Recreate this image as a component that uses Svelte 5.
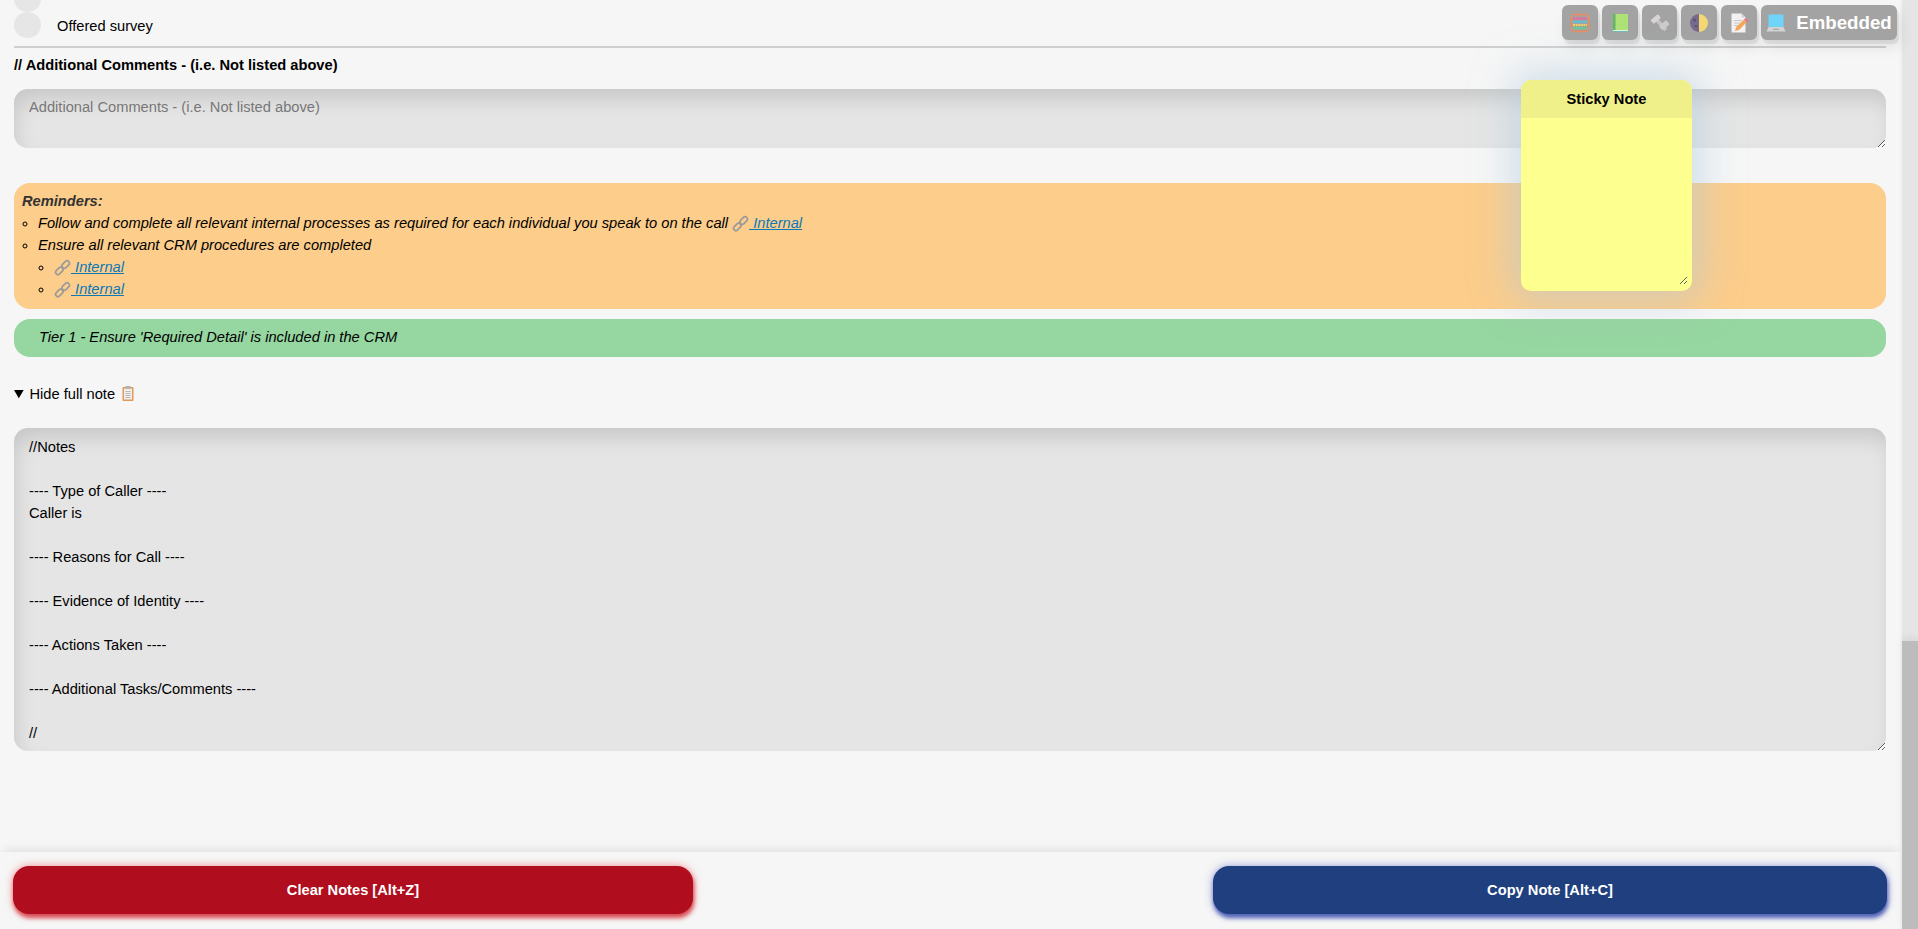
<script>
  let comments = $state('');
  let sticky = $state('');
  let showNote = $state(true);
  let note = $state(`//Notes

---- Type of Caller ----
Caller is

---- Reasons for Call ----

---- Evidence of Identity ----

---- Actions Taken ----

---- Additional Tasks/Comments ----

//`);
</script>

{#snippet chain()}
  <svg class="chain" viewBox="0 0 16 16" width="17" height="17">
    <g fill="none" stroke="#9a9a9a" stroke-width="1.6">
      <rect x="1" y="9" width="8" height="4.4" rx="2.2" transform="rotate(-45 5 11.2)" />
      <rect x="7" y="3" width="8" height="4.4" rx="2.2" transform="rotate(-45 11 5.2)" />
    </g>
  </svg>
{/snippet}

<div class="page">
  <main class="content">
    <div class="clipped"><span class="dot"></span></div>
    <div class="check-row">
      <span class="dot"></span>
      <span class="check-label">Offered survey</span>
    </div>
    <hr />
    <h4>// Additional Comments - (i.e. Not listed above)</h4>
    <textarea class="box comments" placeholder="Additional Comments - (i.e. Not listed above)" bind:value={comments}></textarea>

    <div class="reminders">
      <strong>Reminders:</strong>
      <ul>
        <li>Follow and complete all relevant internal processes as required for each individual you speak to on the call <a href="#top">{@render chain()} Internal</a></li>
        <li>Ensure all relevant CRM procedures are completed
          <ul>
            <li><a href="#top">{@render chain()} Internal</a></li>
            <li><a href="#top">{@render chain()} Internal</a></li>
          </ul>
        </li>
      </ul>
    </div>
    <div class="tier">Tier 1 - Ensure 'Required Detail' is included in the CRM</div>

    <details bind:open={showNote}>
      <summary>Hide full note
        <svg class="clip" viewBox="0 0 12 15" width="12" height="15">
          <rect x="0.5" y="1" width="11" height="14" rx="1" fill="#dc9a5c" />
          <rect x="2" y="2.5" width="8" height="11" fill="#f3efe8" />
          <rect x="3.5" y="0" width="5" height="3" fill="#b5b0aa" />
          <path d="M3.5 5.5h5M3.5 7.5h5M3.5 9.5h5M3.5 11.5h5" stroke="#a9a9a9" stroke-width="0.8" />
        </svg>
      </summary>
      <textarea class="box full-note" bind:value={note}></textarea>
    </details>
  </main>

  <footer class="actions">
    <button class="clear">Clear Notes [Alt+Z]</button>
    <button class="copy">Copy Note [Alt+C]</button>
  </footer>

  <div class="scrollbar"><div class="thumb"></div></div>

  <div class="toolbar">
    <button class="tool" aria-label="Calculator">
      <svg viewBox="0 0 20 20" width="20" height="20">
        <rect x="1.5" y="1.5" width="17" height="17" rx="3.5" fill="#a9a29c" stroke="#ee8b5c" stroke-width="1.4" />
        <path d="M3 5.5h14" stroke="#ef5fa0" stroke-width="2.2" stroke-dasharray="2 .6" />
        <path d="M3 8.8h14" stroke="#4fc3e8" stroke-width="2.2" stroke-dasharray="2 .6" />
        <path d="M3 12h14" stroke="#f3d060" stroke-width="2.2" stroke-dasharray="2 .6" />
        <path d="M3 15.2h14" stroke="#5ad39b" stroke-width="2.2" stroke-dasharray="2 .6" />
      </svg>
    </button>
    <button class="tool" aria-label="Guide">
      <svg viewBox="0 0 20 20" width="20" height="20">
        <rect x="5" y="1" width="13" height="16" fill="#aee176" />
        <rect x="3" y="1" width="2.5" height="18" fill="#5fb865" />
        <rect x="3" y="17" width="15" height="1.2" fill="#e4f3e6" />
        <rect x="3" y="18.2" width="15" height="0.9" fill="#5cbcb4" />
      </svg>
    </button>
    <button class="tool" aria-label="Tools">
      <svg viewBox="0 0 20 20" width="20" height="20">
        <path d="M5 5L16 17" stroke="#c9c3c8" stroke-width="3.5" />
        <rect x="1" y="3.5" width="9.5" height="5" rx="1" fill="#d8d3d7" transform="rotate(-40 5.8 6)" />
        <rect x="9.5" y="9.5" width="9.5" height="5.5" rx="1" fill="#cfcace" transform="rotate(-40 14.2 12.2)" />
      </svg>
    </button>
    <button class="tool" aria-label="Theme">
      <svg viewBox="0 0 20 20" width="20" height="20">
        <path d="M10 1a9 9 0 0 0 0 18z" fill="#776a8c" />
        <path d="M10 1a9 9 0 0 1 0 18z" fill="#f5d774" />
        <circle cx="5.5" cy="7" r="1.6" fill="#5d5272" />
        <circle cx="7" cy="13" r="1.2" fill="#5d5272" />
      </svg>
    </button>
    <button class="tool" aria-label="Notes">
      <svg viewBox="0 0 20 20" width="20" height="20">
        <path d="M2.5 0.5h10l4 4v15h-14z" fill="#f4f1f2" />
        <path d="M12.5 0.5l4 4h-4z" fill="#d6d0d4" />
        <path d="M5 7.5h8M5 10h6M5 12.5h4" stroke="#c9c3d0" stroke-width="1" />
        <path d="M6 18l1.2-4L15 6.5l2.7 2.7L10 17z" fill="#f2a65a" />
        <path d="M15 6.5l1.6-1.6 2.8 2.8-1.7 1.5z" fill="#ef6f8e" />
      </svg>
    </button>
    <button class="tool mode">
      <svg viewBox="0 0 20 20" width="20" height="20">
        <rect x="2.5" y="1.5" width="15" height="12.5" fill="#6fd4f7" />
        <path d="M2.5 14h15l2 4.5H.5z" fill="#d2d2d2" />
        <rect x="7" y="15.8" width="6" height="0.9" fill="#999" />
      </svg>
      Embedded
    </button>
  </div>

  <div class="sticky">
    <div class="sticky-title">Sticky Note</div>
    <textarea bind:value={sticky}></textarea>
  </div>
</div>

<style>
  :global(body) {
    margin: 0;
    overflow: hidden;
    background: #f6f6f6;
  }
  .page {
    position: relative;
    height: 929px;
    overflow: hidden;
    font-family: "Liberation Sans", Arial, sans-serif;
    font-size: 14.67px;
    color: #000;
  }
  .content {
    width: 1888px;
    padding-left: 14px;
    height: 852px;
  }
  .clipped {
    display: flex;
    align-items: flex-end;
    height: 12px;
  }
  .clipped .dot {
    flex: none;
  }
  .check-row {
    display: flex;
    align-items: center;
    gap: 16px;
    height: 26px;
  }
  .check-label {
    padding-top: 2px;
  }
  .dot {
    display: block;
    width: 27px;
    height: 26px;
    border-radius: 50%;
    background: #e6e6e6;
  }
  hr {
    height: 2px;
    border: 0;
    margin: 8px 0 0;
    background: #cfcfcf;
    width: 1872px;
  }
  h4 {
    font-size: 14.67px;
    margin: 9px 0 16px;
    line-height: 16px;
  }
  .box {
    display: block;
    box-sizing: border-box;
    width: 1872px;
    margin: 0;
    padding: 8px 15px;
    border: 0;
    border-radius: 14px;
    outline: 0;
    background: #e5e5e5;
    box-shadow: inset 4px 12px 20px -2px rgba(0, 0, 0, 0.13);
    font: 14.67px/22px "Liberation Sans", Arial, sans-serif;
    color: #000;
  }
  .box::placeholder {
    color: #777;
  }
  .comments {
    height: 59px;
    padding-top: 7px;
  }
  .reminders {
    box-sizing: border-box;
    width: 1872px;
    height: 126px;
    margin-top: 35px;
    padding: 7px 8px;
    border-radius: 16px;
    background: #fccd8b;
    font-style: italic;
    line-height: 22px;
  }
  .reminders strong {
    color: #333;
  }
  ul {
    margin: 0;
    padding-left: 16px;
    list-style: circle;
  }
  a {
    color: #0b78b8;
  }
  .chain {
    vertical-align: -4px;
  }
  .tier {
    box-sizing: border-box;
    width: 1872px;
    height: 38px;
    margin-top: 10px;
    padding: 0 25px;
    border-radius: 16px;
    background: #96d6a0;
    font-style: italic;
    line-height: 37px;
  }
  details {
    margin-top: 27px;
  }
  summary {
    line-height: 20px;
    cursor: pointer;
  }
  .clip {
    vertical-align: -2px;
    margin-left: 3px;
  }
  .full-note {
    height: 323px;
    margin-top: 24px;
  }
  .actions {
    box-sizing: border-box;
    display: flex;
    justify-content: space-between;
    width: 1902px;
    height: 77px;
    padding: 14px 15px 0 13px;
    box-shadow: 0 -6px 10px -4px rgba(0, 0, 0, 0.1);
    background: #f6f6f6;
    position: relative;
  }
  .actions button {
    height: 48px;
    border: 0;
    border-radius: 16px;
    color: #fff;
    font: bold 14.67px "Liberation Sans", Arial, sans-serif;
    cursor: pointer;
  }
  .clear {
    width: 680px;
    background: #b00d1e;
    box-shadow: 1px 4px 4px rgba(205, 35, 45, 0.75), 0 0 8px rgba(240, 60, 70, 0.55);
  }
  .copy {
    width: 674px;
    background: #203f7e;
    box-shadow: 1px 4px 4px rgba(50, 70, 170, 0.8), 0 0 8px rgba(60, 80, 190, 0.5);
  }
  .scrollbar {
    position: absolute;
    top: 0;
    right: 0;
    width: 16px;
    height: 929px;
    background: #e5e5e5;
    box-shadow: -2px 0 0 #f1f1f1;
  }
  .thumb {
    position: absolute;
    left: 0;
    right: 0;
    bottom: 0;
    height: 288px;
    background: #bcbcbc;
    box-shadow: 0 -4px 6px rgba(0, 0, 0, 0.06);
  }
  .toolbar {
    position: absolute;
    top: 5px;
    right: 21px;
    display: flex;
    gap: 4px;
  }
  .tool {
    display: flex;
    align-items: center;
    justify-content: center;
    gap: 10px;
    height: 35px;
    width: 36px;
    padding: 0;
    border: 0;
    border-radius: 6px;
    background: #a3a3a3;
    box-shadow: 2px 4px 1px rgba(0, 0, 0, 0.07), 4px 8px 14px rgba(0, 0, 0, 0.08);
    color: #fff;
    font: bold 18.7px "Liberation Sans", Arial, sans-serif;
  }
  .tool:nth-child(3) {
    width: 35px;
  }
  .mode {
    width: 136px;
  }
  .sticky {
    position: absolute;
    left: 1521px;
    top: 80px;
    display: flex;
    flex-direction: column;
    width: 171px;
    height: 211px;
    border-radius: 10px;
    overflow: hidden;
    background: #fdff8f;
    box-shadow: 0 0 40px 8px rgba(172, 200, 220, 0.55);
  }
  .sticky-title {
    height: 38px;
    flex: none;
    background: #f0f08a;
    font-weight: bold;
    line-height: 39px;
    text-align: center;
  }
  .sticky textarea {
    flex: 1;
    border: 0;
    outline: 0;
    margin: 0 4px 6px 0;
    padding: 8px;
    background: transparent;
    font: 14.67px "Liberation Sans", Arial, sans-serif;
  }
</style>
